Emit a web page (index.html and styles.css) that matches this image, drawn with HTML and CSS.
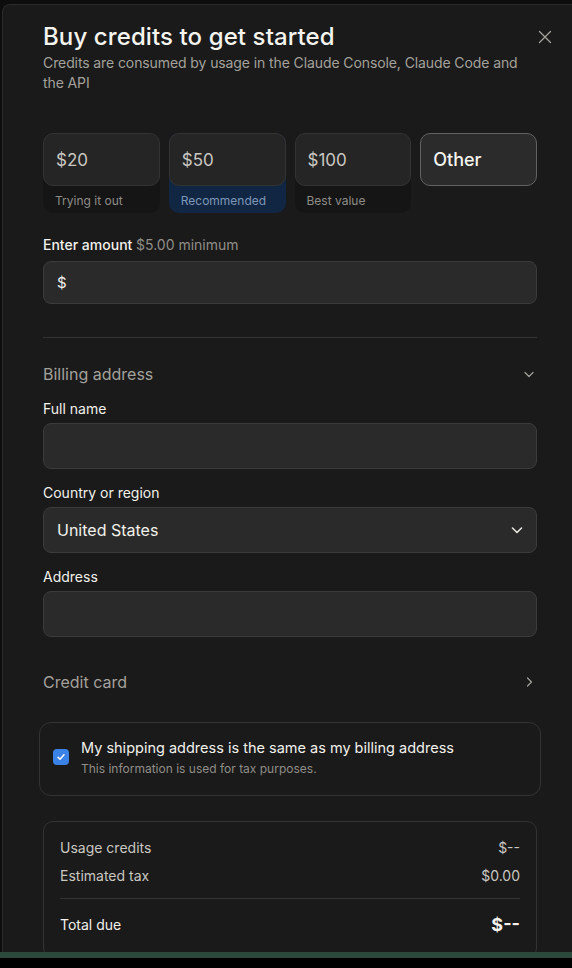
FILE: index.html
```html
<!DOCTYPE html>
<html lang="en">
<head>
<meta charset="utf-8">
<title>Buy credits</title>
<link rel="stylesheet" href="styles.css">
</head>
<body>
<div class="page">
  <div class="modal">
    <button class="close" aria-label="Close">
      <svg width="14" height="14" viewBox="0 0 14 14" fill="none" stroke="#a3a19b" stroke-width="1.3" stroke-linecap="round"><path d="M1.5 1.5l11 11M12.5 1.5l-11 11"/></svg>
    </button>
    <header class="head">
      <h1 class="title">Buy credits to get started</h1>
      <p class="subtitle">Credits are consumed by usage in the Claude Console, Claude Code and the API</p>
    </header>

    <div class="options">
      <div class="option">
        <div class="opt-box">$20</div>
        <div class="opt-label">Trying it out</div>
      </div>
      <div class="option recommended">
        <div class="opt-box">$50</div>
        <div class="opt-label">Recommended</div>
      </div>
      <div class="option">
        <div class="opt-box">$100</div>
        <div class="opt-label">Best value</div>
      </div>
      <div class="option other">
        <div class="opt-box">Other</div>
      </div>
    </div>

    <div class="field amount-field">
      <label class="label strong">Enter amount <span class="muted">$5.00 minimum</span></label>
      <div class="input amount-input">$</div>
    </div>

    <hr class="divider">

    <div class="section-head billing-head">
      <span>Billing address</span>
      <svg width="12" height="12" viewBox="0 0 12 12" fill="none" stroke="#a3a19b" stroke-width="1.2" stroke-linecap="round" stroke-linejoin="round"><path d="M2 4.5l4 4 4-4"/></svg>
    </div>

    <div class="field">
      <label class="label">Full name</label>
      <div class="input"></div>
    </div>
    <div class="field">
      <label class="label">Country or region</label>
      <div class="input select">
        <span>United States</span>
        <svg width="14" height="14" viewBox="0 0 14 14" fill="none" stroke="#e6e4de" stroke-width="1.6" stroke-linecap="round" stroke-linejoin="round"><path d="M2.5 5l4.5 4.5 4.5-4.5"/></svg>
      </div>
    </div>
    <div class="field">
      <label class="label">Address</label>
      <div class="input"></div>
    </div>

    <div class="section-head card-head">
      <span>Credit card</span>
      <svg width="12" height="12" viewBox="0 0 12 12" fill="none" stroke="#a3a19b" stroke-width="1.2" stroke-linecap="round" stroke-linejoin="round"><path d="M4.5 2l4 4-4 4"/></svg>
    </div>

    <div class="check-card">
      <span class="checkbox">
        <svg width="10" height="10" viewBox="0 0 10 10" fill="none" stroke="#fff" stroke-width="1.5" stroke-linecap="round" stroke-linejoin="round"><path d="M2 5.2l2 2 4-4.4"/></svg>
      </span>
      <div class="check-text">
        <div class="check-title">My shipping address is the same as my billing address</div>
        <div class="check-sub">This information is used for tax purposes.</div>
      </div>
    </div>

    <div class="summary">
      <div class="row"><span>Usage credits</span><span>$--</span></div>
      <div class="row"><span>Estimated tax</span><span>$0.00</span></div>
      <hr class="sum-divider">
      <div class="row total"><span>Total due</span><span class="total-val">$--</span></div>
    </div>
  </div>
  <div class="bottom-bar"></div>
</div>
</body>
</html>
```

FILE: styles.css
```css
* { box-sizing: border-box; }

html, body {
  margin: 0;
  padding: 0;
  background: #0d0d0d;
}

body {
  font-family: Inter, "Noto Sans", "Liberation Sans", sans-serif;
  color: #f2f1ec;
}

.page {
  position: relative;
  width: 572px;
  height: 968px;
  overflow: hidden;
  padding: 4px 0 0 2px;
}

.modal {
  position: relative;
  width: 576px;
  min-height: 1100px;
  background: #1a1a1a;
  border: 1px solid #2a2a2a;
  border-right: none;
  border-radius: 8px 0 0 8px;
  padding: 16px 40px 0 40px;
}

.close {
  position: absolute;
  top: 25px;
  right: 26px;
  width: 14px;
  height: 14px;
  padding: 0;
  border: none;
  background: none;
  display: flex;
}

.head { width: 494px; }

.title {
  margin: 0;
  font-size: 24px;
  line-height: 32px;
  font-weight: 500;
  letter-spacing: 0.1px;
  color: #f5f4ef;
}

.subtitle {
  margin: 0;
  font-size: 14px;
  line-height: 20px;
  color: #a3a19b;
  letter-spacing: -0.1px;
}

.options {
  width: 494px;
  margin-top: 40px;
  display: grid;
  grid-template-columns: repeat(4, 1fr);
  gap: 9px;
  align-items: start;
}

.option {
  background: #151515;
  border-radius: 10px;
}

.opt-box {
  height: 53px;
  display: flex;
  align-items: center;
  padding: 0 12px;
  background: #252525;
  border: 1px solid #333;
  border-radius: 10px;
  font-size: 17px;
  color: #c9c7c1;
}

.opt-label {
  height: 27px;
  padding: 7px 12px 0;
  font-size: 12px;
  line-height: 16px;
  color: #8e8c87;
}

.recommended { background: #102643; }
.recommended .opt-label { color: #7f97b8; }

.other { background: none; }
.other .opt-box {
  background: #2b2b2b;
  border-color: #626262;
  color: #f5f4ef;
  font-size: 18px;
  font-weight: 500;
}

.field {
  width: 494px;
  display: flex;
  flex-direction: column;
  gap: 4px;
  margin-top: 14px;
}

.amount-field { margin-top: 22px; gap: 6px; }

.label {
  font-size: 14px;
  line-height: 20px;
  font-weight: 400;
  color: #f2f1ec;
}

.label.strong { font-weight: 500; }

.muted {
  font-weight: 400;
  color: #8f8d88;
}

.input {
  height: 46px;
  background: #2a2a2a;
  border: 1px solid #3b3b3b;
  border-radius: 8px;
  display: flex;
  align-items: center;
  padding: 0 13px;
  font-size: 16px;
  color: #f2f1ec;
}

.amount-input { height: 43px; font-size: 15px; }

.select { justify-content: space-between; padding-right: 12px; }

.divider {
  width: 494px;
  margin: 33px 0 0;
  border: none;
  border-top: 1px solid #333;
}

.section-head {
  width: 494px;
  display: flex;
  justify-content: space-between;
  align-items: center;
  font-size: 16px;
  line-height: 24px;
  color: #a3a19b;
  padding-right: 2px;
}

.billing-head { margin-top: 24px; }
.billing-head + .field { margin-top: 13px; }
.card-head { margin-top: 33px; }

.check-card {
  width: 502px;
  margin: 28px 0 0 -4px;
  border: 1px solid #333;
  border-radius: 12px;
  display: flex;
  align-items: center;
  gap: 12px;
  padding: 12px 12px 16px 13px;
  min-height: 74px;
}

.checkbox {
  width: 16px;
  height: 16px;
  background: #3a82e6;
  border-radius: 4px;
  display: flex;
  align-items: center;
  justify-content: center;
  flex: none;
}

.check-title {
  font-size: 14.5px;
  line-height: 20px;
  font-weight: 400;
  color: #f2f1ec;
}

.check-sub {
  margin-top: 3px;
  font-size: 12px;
  line-height: 16px;
  color: #8f8d88;
}

.summary {
  width: 494px;
  margin-top: 25px;
  border: 1px solid #333;
  border-radius: 10px;
  padding: 16px 16px 20px;
}

.row {
  display: flex;
  justify-content: space-between;
  font-size: 14px;
  line-height: 20px;
  color: #c9c7c1;
}

.row + .row { margin-top: 8px; }

.sum-divider {
  margin: 12px 0 14px;
  border: none;
  border-top: 1px solid #353535;
}

.total {
  line-height: 24px;
  color: #f2f1ec;
  align-items: center;
}

.total-val {
  font-size: 18px;
  font-weight: 700;
}

.bottom-bar {
  position: absolute;
  left: 0;
  right: 0;
  top: 952px;
  height: 16px;
  background: #000;
  border-top: 6px solid #2b4a3d;
}
```
